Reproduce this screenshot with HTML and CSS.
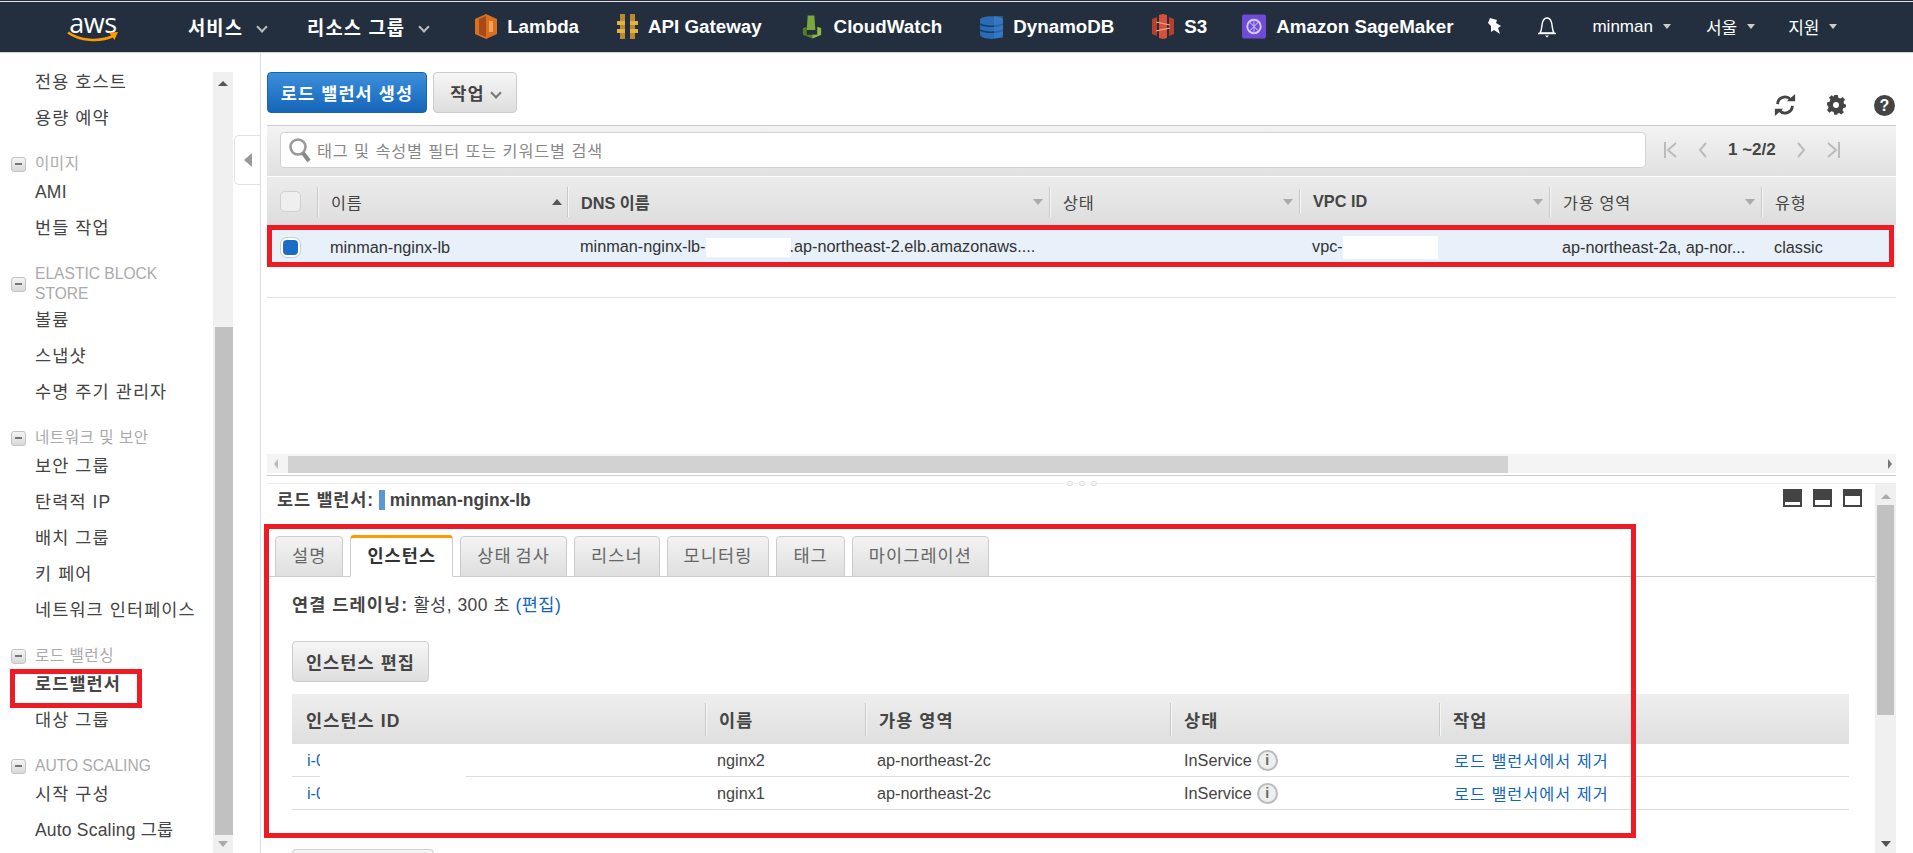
FILE: index.html
```html
<!DOCTYPE html>
<html lang="ko">
<head>
<meta charset="UTF-8" />
<title>EC2 Management Console</title>
<link rel="stylesheet" href="styles.css">
</head>
<body>

<!-- Top navigation -->
<header class="topbar">
  <div class="logo">
    <span class="logo-text">aws</span>
    <svg class="logo-smile" width="52" height="12" viewBox="0 0 52 12"><path d="M1 1.5C12 9.5 32 12 47 4.5" fill="none" stroke="#f90" stroke-width="2.6"/><path d="M42 1.5l9-.5-3.500 8z" fill="#f90"/></svg>
  </div>
  <div class="menu menu-services">서비스<i class="chev"></i></div>
  <div class="menu menu-groups">리소스 그룹<i class="chev"></i></div>
  <nav class="shortcuts">
    <a class="shortcut">
      <svg width="22" height="25" viewBox="0 0 22 25"><path d="M0 5l11-5 11 5v15l-11 5-11-5z" fill="#d8701f"/><path d="M4 5l7-3v21l-7-3z" fill="#a8491a"/><path d="M14 7h4v11h-4z" fill="#f5a35a"/></svg>
      Lambda</a>
    <a class="shortcut">
      <svg width="21" height="25" viewBox="0 0 21 25"><path d="M3 0h5v25H3zM13 0h5v25h-5z" fill="#b98a2e"/><path d="M0 7h8v4H0zM13 7h8v4h-8zM0 15h8v4H0zM13 15h8v4h-8z" fill="#e0b23f"/></svg>
      API Gateway</a>
    <a class="shortcut">
      <svg width="24" height="24" viewBox="0 0 25 24"><path d="M8 0h7l1 15H7z" fill="#7aa83c"/><path d="M3 13l4-1v8h11v-8l4 1v7l-9 4-10-4z" fill="#587d2a"/><path d="M13 24l9-4v-7l-4-1v8h-5z" fill="#8cba48"/></svg>
      CloudWatch</a>
    <a class="shortcut">
      <svg width="23" height="24" viewBox="0 0 23 24"><path d="M0 5C0 0 23 0 23 5v14c0 6.500-23 6.500-23 0z" fill="#2b6cb5"/><path d="M0 9c5 3 18 3 23 0M0 15c5 3 18 3 23 0" fill="none" stroke="#123f75" stroke-width="1.600"/><path d="M14 1h9v22h-9z" fill="#3f86cf" opacity=".5"/></svg>
      DynamoDB</a>
    <a class="shortcut shortcut-s3">
      <svg width="22" height="25" viewBox="0 0 22 25"><path d="M0 5l5-2v19l-5-2zM22 5l-5-2v19l5-2z" fill="#b8402a"/><path d="M7 1l4-1v25l-4-1zM15 1l-4-1v25l4-1z" fill="#d9503a"/><path d="M4 8l14 3M4 17l14-3" stroke="#f3b0a3" stroke-width="1.200"/></svg>
      S3</a>
    <a class="shortcut">
      <svg width="24" height="25" viewBox="0 0 25 25"><rect width="25" height="25" rx="2" fill="#6f4bd8"/><circle cx="12.500" cy="12.500" r="7" fill="none" stroke="#d9cffa" stroke-width="2"/><path d="M8 8l9 9M17 8l-9 9M12.500 5v15" stroke="#b9a8f3" stroke-width="1.200"/></svg>
      Amazon SageMaker</a>
  </nav>
  <svg class="pin" width="17" height="17" viewBox="0 0 17 17"><path d="M4 0l7 2-1 3 5 3-3 2 2 6-6-4-3 2V8L2 5z" fill="#fff"/></svg>
  <svg class="bell" width="20" height="22" viewBox="0 0 20 22"><path d="M3 17c2-3 1.500-7 2.500-10.500C6.500 3 8 2 10 2s3.500 1 4.500 4.500C15.500 10 15 14 17 17z" fill="none" stroke="#fff" stroke-width="1.400"/><path d="M1 17.500h18" stroke="#fff" stroke-width="1.400"/><path d="M8 19.500h4l-2 2z" fill="#fff"/></svg>
  <div class="menu-small menu-user">minman<i class="caret"></i></div>
  <div class="menu-small menu-region">서울<i class="caret"></i></div>
  <div class="menu-small menu-support">지원<i class="caret"></i></div>
</header>

<div class="layout">

  <!-- Left navigation -->
  <aside class="sidenav">
    <div class="side-list">
      <a class="side-item">전용 호스트</a>
      <a class="side-item">용량 예약</a>
      <div class="side-group"><i class="minus"></i><span class="ko">이미지</span></div>
      <a class="side-item side-latin">AMI</a>
      <a class="side-item">번들 작업</a>
      <div class="side-group side-group-tall"><i class="minus"></i><span>ELASTIC BLOCK<br>STORE</span></div>
      <a class="side-item">볼륨</a>
      <a class="side-item">스냅샷</a>
      <a class="side-item">수명 주기 관리자</a>
      <div class="side-group"><i class="minus"></i><span class="ko">네트워크 및 보안</span></div>
      <a class="side-item">보안 그룹</a>
      <a class="side-item">탄력적 IP</a>
      <a class="side-item">배치 그룹</a>
      <a class="side-item">키 페어</a>
      <a class="side-item">네트워크 인터페이스</a>
      <div class="side-group"><i class="minus"></i><span class="ko">로드 밸런싱</span></div>
      <a class="side-item active">로드밸런서<span class="mark mark-side"></span></a>
      <a class="side-item">대상 그룹</a>
      <div class="side-group"><i class="minus"></i><span>AUTO SCALING</span></div>
      <a class="side-item">시작 구성</a>
      <a class="side-item side-latin">Auto Scaling 그룹</a>
    </div>
    <div class="side-scroll">
      <i class="tri-up"></i>
      <div class="side-thumb"></div>
      <i class="tri-down"></i>
    </div>
    <div class="collapse-tab"><i class="tri-left"></i></div>
  </aside>

  <main class="content">
    <div class="toolbar">
      <button class="btn btn-primary">로드 밸런서 생성</button>
      <button class="btn btn-default">작업<i class="btn-chev"></i></button>
      <div class="tool-icons">
        <svg class="refresh" width="24" height="24" viewBox="0 0 26 24"><path d="M5 11a8 8 0 0 1 14-5" fill="none" stroke="#444" stroke-width="3"/><path d="M15 8h9V0z" fill="#444"/><path d="M21 13a8 8 0 0 1-14 5" fill="none" stroke="#444" stroke-width="3"/><path d="M11 16H2v8z" fill="#444"/></svg>
        <svg width="20" height="20" viewBox="0 0 20 20"><path d="M8 0h4l.6 3 2.400 1 2.500-1.700 2.500 3-1.700 2.400.7 2.300 2 .6v3l-2.800.8-1 2.300 1.600 2.500-3 2.500-2.300-1.600-2.500.9L12 22H8l-.6-3-2.400-1-2.500 1.700-2.500-3 1.700-2.400-.7-2.300L0 11.400v-3l2.800-.8 1-2.300L2.200 2.800l3-2.500L7.500 1.900z" fill="#444" transform="scale(.9)"/><circle cx="9" cy="10" r="3" fill="#fff"/></svg>
        <span class="help-icon">?</span>
      </div>
    </div>

    <div class="filter-bar">
      <div class="search-box">
        <svg width="24" height="26" viewBox="0 0 24 26"><circle cx="10" cy="10" r="7.500" fill="none" stroke="#999" stroke-width="2.600"/><path d="M15 16l6 8" stroke="#888" stroke-width="4"/></svg>
        <span>태그 및 속성별 필터 또는 키워드별 검색</span>
      </div>
      <div class="pager">
        <svg width="14" height="16" viewBox="0 0 14 16"><path d="M1 0v16M12 1L4 8l8 7" fill="none" stroke="#bbb" stroke-width="2"/></svg>
        <svg width="10" height="16" viewBox="0 0 10 16"><path d="M8 1L2 8l6 7" fill="none" stroke="#bbb" stroke-width="2"/></svg>
        <b>1 ~2/2</b>
        <svg width="10" height="16" viewBox="0 0 10 16"><path d="M2 1l6 7-6 7" fill="none" stroke="#bbb" stroke-width="2"/></svg>
        <svg width="14" height="16" viewBox="0 0 14 16"><path d="M13 0v16M2 1l8 7-8 7" fill="none" stroke="#bbb" stroke-width="2"/></svg>
      </div>
    </div>

    <div class="lb-grid lb-head">
      <div class="cell"><i class="check"></i></div>
      <div class="cell cell-sep cell-ko">이름<i class="sort sort-on"></i></div>
      <div class="cell cell-sep strong">DNS 이름<i class="sort"></i></div>
      <div class="cell cell-sep cell-ko">상태<i class="sort"></i></div>
      <div class="cell cell-sep strong">VPC ID<i class="sort"></i></div>
      <div class="cell cell-sep cell-ko">가용 영역<i class="sort"></i></div>
      <div class="cell cell-sep cell-ko">유형</div>
    </div>
    <div class="lb-grid lb-row">
      <div class="cell"><i class="check checked"></i></div>
      <div class="cell">minman-nginx-lb</div>
      <div class="cell">minman-nginx-lb-<span class="redact redact-dns"></span>.ap-northeast-2.elb.amazonaws....</div>
      <div class="cell"></div>
      <div class="cell">vpc-<span class="redact redact-vpc"></span></div>
      <div class="cell">ap-northeast-2a, ap-nor...</div>
      <div class="cell">classic</div>
      <span class="mark mark-row"></span>
    </div>
    <div class="lb-empty"></div>

    <div class="hscroll">
      <i class="tri-left tri-small"></i>
      <div class="hthumb"></div>
      <i class="tri-right"></i>
    </div>

    <div class="splitter"><i></i><i></i><i></i></div>

    <section class="pane">
      <div class="pane-body">
        <div class="pane-head">
          <h2><span class="pane-label">로드 밸런서:</span> <i class="lb-flag"></i> minman-nginx-lb</h2>
          <div class="view-icons">
            <i class="view view-s"></i>
            <i class="view view-m"></i>
            <i class="view view-l"></i>
          </div>
        </div>

        <div class="tabs">
          <div class="tab">설명</div>
          <div class="tab tab-active">인스턴스</div>
          <div class="tab">상태 검사</div>
          <div class="tab">리스너</div>
          <div class="tab">모니터링</div>
          <div class="tab">태그</div>
          <div class="tab">마이그레이션</div>
        </div>

        <div class="tab-body">
          <p class="drain"><b>연결 드레이닝:</b> 활성, 300 초 <a>(편집)</a></p>
          <button class="btn btn-default btn-edit">인스턴스 편집</button>

          <div class="inst-table">
            <div class="inst-grid inst-head">
              <div class="inst-cell">인스턴스 ID</div>
              <div class="inst-cell cell-sep">이름</div>
              <div class="inst-cell cell-sep">가용 영역</div>
              <div class="inst-cell cell-sep">상태</div>
              <div class="inst-cell cell-sep">작업</div>
            </div>
            <div class="inst-grid inst-row">
              <div class="inst-cell"><a>i-0</a></div>
              <div class="inst-cell">nginx2</div>
              <div class="inst-cell">ap-northeast-2c</div>
              <div class="inst-cell inst-status">InService <i class="info">i</i></div>
              <div class="inst-cell"><a class="inst-action">로드 밸런서에서 제거</a></div>
            </div>
            <div class="inst-grid inst-row">
              <div class="inst-cell"><a>i-0</a></div>
              <div class="inst-cell">nginx1</div>
              <div class="inst-cell">ap-northeast-2c</div>
              <div class="inst-cell inst-status">InService <i class="info">i</i></div>
              <div class="inst-cell"><a class="inst-action">로드 밸런서에서 제거</a></div>
            </div>
            <span class="redact-ids"></span>
          </div>

          <button class="btn btn-default btn-next"></button>
        </div>
        <span class="mark mark-pane"></span>
      </div>
      <div class="pane-scroll">
        <i class="tri-up tri-light"></i>
        <div class="pane-thumb"></div>
        <i class="tri-down tri-dark"></i>
      </div>
    </section>
  </main>
</div>

</body>
</html>
```

FILE: styles.css
```css
html, body {
  margin: 0;
  height: 853px;
  overflow: hidden;
}
body {
  font-family: "Liberation Sans", "Noto Sans CJK KR", sans-serif;
  font-size: 16.25px;
  color: #444;
  background-color: #fff;
}
a { color: #1166bb; }
i { font-style: normal; }

/* Red annotation boxes drawn over the screenshot */
.mark {
  position: absolute;
  border: 5px solid #ed1c24;
  box-sizing: border-box;
  pointer-events: none;
}
.mark-side { left: 10px; top: 3px; width: 132px; height: 39px; }
.mark-row { left: 0; top: 0; right: 2px; bottom: 0; }
.mark-pane { left: -3px; top: 40px; width: 1372px; height: 314px; }

/* Top navigation */
.topbar {
  display: flex;
  align-items: center;
  box-sizing: border-box;
  height: 53px;
  padding-left: 67px;
  background-color: #232f3e;
  border-top: 1px solid #232f3e;
  border-bottom: 1px solid #d0d0d0;
  box-shadow: inset 0 1px 0 #e6e6e6;
  color: #fff;
}
.logo {
  position: relative;
  width: 52px;
  height: 30px;
  flex: none;
}
.logo-text {
  display: block;
  font-family: "Open Sans", sans-serif;
  font-size: 27px;
  line-height: 22px;
  letter-spacing: -.5px;
  text-align: center;
}
.logo-smile { position: absolute; left: 0; top: 19px; }
.menu {
  display: flex;
  align-items: center;
  font-size: 18.75px;
  font-weight: bold;
  letter-spacing: 1.1px;
  white-space: nowrap;
}
.menu-services { margin-left: 69px; }
.menu-groups { margin-left: 41px; }
.chev {
  width: 6px;
  height: 6px;
  margin: 0 0 0 15px;
  border-right: 2px solid #bbb;
  border-bottom: 2px solid #bbb;
  transform: rotate(45deg);
}
.shortcuts {
  display: flex;
  gap: 38px;
  margin-left: 47px;
}
.shortcut {
  display: flex;
  align-items: center;
  gap: 10px;
  color: #fff;
  font-size: 18.75px;
  font-weight: bold;
  white-space: nowrap;
}
.shortcut-s3 { margin-right: -3px; }
.pin { margin-left: 33px; flex: none; }
.bell { margin-left: 34px; flex: none; }
.menu-small {
  display: flex;
  align-items: center;
  font-size: 17px;
  white-space: nowrap;
}
.menu-user { margin-left: 35px; }
.menu-region { margin-left: 35px; }
.menu-support { margin-left: 33px; }
.caret {
  margin-left: 10px;
  border-left: 4px solid transparent;
  border-right: 4px solid transparent;
  border-top: 5px solid #ccc;
}

.layout {
  display: flex;
  height: 800px;
  overflow: hidden;
}

/* Left navigation */
.sidenav {
  position: relative;
  display: flex;
  flex: none;
  width: 261px;
  box-sizing: border-box;
  border-right: 1px solid #ddd;
}
.side-list {
  width: 213px;
  padding-top: 11px;
  flex: none;
}
.side-item {
  position: relative;
  display: block;
  height: 36px;
  line-height: 36px;
  padding-left: 35px;
  font-size: 17.5px;
  letter-spacing: 1.1px;
  color: #444;
  white-space: nowrap;
}
.side-latin { letter-spacing: .2px; }
.side-item.active { font-weight: bold; }
.side-group {
  display: flex;
  align-items: center;
  margin-top: 18px;
  padding-left: 11px;
  font-size: 15.6px;
  line-height: 20px;
  color: #aaa;
  min-height: 20px;
}
.side-group-tall { margin-bottom: -2px; }
.side-group span { margin-left: 9px; }
.side-group .ko { letter-spacing: .5px; }
.minus {
  position: relative;
  flex: none;
  box-sizing: border-box;
  width: 15px;
  height: 15px;
  border: 1px solid #c4c4c4;
  border-radius: 3px;
  background: linear-gradient(#f4f4f4, #d8d8d8);
}
.minus::after {
  content: "";
  position: absolute;
  left: 3px;
  right: 3px;
  top: 5px;
  height: 2px;
  background-color: #777;
}
.side-scroll {
  position: relative;
  width: 20px;
  margin-top: 19px;
  background-color: #f0f0f0;
}
.side-thumb {
  position: absolute;
  left: 2px;
  right: 0;
  top: 255px;
  height: 508px;
  background-color: #c1c1c1;
}
.tri-up, .tri-down, .tri-left, .tri-right { display: block; width: 0; height: 0; }
.tri-up {
  position: absolute;
  left: 5px;
  top: 9px;
  border-left: 5px solid transparent;
  border-right: 5px solid transparent;
  border-bottom: 5px solid #555;
}
.tri-down {
  position: absolute;
  left: 5px;
  bottom: 6px;
  border-left: 5px solid transparent;
  border-right: 5px solid transparent;
  border-top: 6px solid #aaa;
}
.collapse-tab {
  position: absolute;
  left: 234px;
  top: 82px;
  display: flex;
  align-items: center;
  justify-content: center;
  width: 26px;
  height: 50px;
  box-sizing: border-box;
  background-color: #fff;
  border: 1px solid #e2e2e2;
  border-right: none;
  border-radius: 5px 0 0 5px;
}
.tri-left {
  border-top: 7px solid transparent;
  border-bottom: 7px solid transparent;
  border-right: 8px solid #999;
}
.tri-small {
  border-top-width: 5px;
  border-bottom-width: 5px;
  border-right: 4px solid #bbb;
}
.tri-right {
  border-top: 5px solid transparent;
  border-bottom: 5px solid transparent;
  border-left: 4px solid #777;
}

/* Main content */
.content {
  flex: 1;
  display: flex;
  flex-direction: column;
  min-width: 0;
  padding: 0 17px 0 6px;
}
.toolbar {
  display: flex;
  align-items: flex-start;
  gap: 6px;
  height: 72px;
  box-sizing: border-box;
  padding-top: 19px;
  flex: none;
}
.btn {
  height: 41px;
  box-sizing: border-box;
  padding: 0;
  border-radius: 4px;
  font-family: inherit;
  font-size: 17.5px;
  font-weight: bold;
  letter-spacing: 1.1px;
  cursor: pointer;
}
.btn-primary {
  width: 160px;
  color: #fff;
  border: 1px solid #1c62a8;
  background: linear-gradient(#3d8fdb, #1565b9);
}
.btn-default {
  color: #444;
  border: 1px solid #ccc;
  background: linear-gradient(#f6f6f6, #dedede);
}
.toolbar .btn-default { width: 84px; }
.btn-chev {
  display: inline-block;
  width: 6px;
  height: 6px;
  margin: 0 0 3px 7px;
  border-right: 2px solid #777;
  border-bottom: 2px solid #777;
  transform: rotate(45deg);
}
.tool-icons {
  display: flex;
  align-items: center;
  gap: 27px;
  margin-left: auto;
  margin-top: 21px;
  margin-right: 1px;
}
.refresh { margin-right: 3px; }
.help-icon {
  display: block;
  width: 21px;
  height: 21px;
  border-radius: 50%;
  background-color: #444;
  color: #fff;
  font-size: 16px;
  font-weight: bold;
  line-height: 21px;
  text-align: center;
}

.filter-bar {
  display: flex;
  align-items: center;
  flex: none;
  height: 52px;
  box-sizing: border-box;
  padding-left: 13px;
  padding-bottom: 3px;
  border-top: 1px solid #ccc;
  border-bottom: 1px solid #fff;
  background: linear-gradient(#f3f3f3, #e1e1e1);
}
.search-box {
  display: flex;
  align-items: center;
  gap: 5px;
  width: 1366px;
  height: 36px;
  box-sizing: border-box;
  padding-left: 7px;
  background-color: #fff;
  border: 1px solid #d2d2d2;
  border-radius: 4px;
  font-size: 16.25px;
  letter-spacing: .9px;
  color: #888;
}
.pager {
  display: flex;
  align-items: center;
  margin-left: 18px;
  gap: 20px;
  font-size: 17px;
}

/* Load balancer table */
.lb-grid {
  display: grid;
  grid-template-columns: 50px 250px 482px 250px 250px 212px 135px;
  flex: none;
}
.lb-head {
  height: 48px;
  padding-top: 1px;
  box-sizing: border-box;
  background: linear-gradient(#ececec, #dddddd);
  align-items: center;
}
.cell {
  position: relative;
  padding-left: 14px;
  white-space: nowrap;
}
.cell.strong { font-weight: bold; }
.cell-ko { letter-spacing: .7px; }
.cell-sep::before {
  content: "";
  position: absolute;
  left: 0;
  top: -3px;
  bottom: -3px;
  width: 1px;
  background-color: #c9c9c9;
  box-shadow: 1px 0 0 #f6f6f6;
}
.check {
  display: block;
  width: 21px;
  height: 21px;
  margin-left: -1px;
  box-sizing: border-box;
  border: 1px solid #cfcfcf;
  border-radius: 5px;
  background-color: #efefef;
}
.check.checked {
  background: #1a6cc4;
  border: 2px solid #fff;
  outline: 1px solid #ccc;
  outline-offset: 0;
  width: 19px;
  height: 19px;
  margin-left: 1px;
  border-radius: 6px;
}
.sort {
  position: absolute;
  right: 6px;
  top: 50%;
  margin-top: -3px;
  border-left: 5px solid transparent;
  border-right: 5px solid transparent;
  border-top: 6px solid #aaa;
}
.sort-on {
  right: 5px;
  border-top: none;
  border-bottom: 6px solid #555;
}
.lb-row {
  position: relative;
  height: 42px;
  padding-top: 2px;
  box-sizing: border-box;
  align-items: center;
  background-color: #e8f0fa;
  color: #333;
}
.lb-row .cell { padding-left: 13px; }
.redact {
  display: inline-block;
  vertical-align: middle;
  background-color: #fff;
}
.redact-dns { width: 85px; height: 19px; margin-right: -1px; }
.redact-vpc { width: 95px; height: 23px; }
.lb-empty {
  flex: none;
  height: 31px;
  box-sizing: border-box;
  border-bottom: 1px solid #e0e0e0;
}

.hscroll {
  position: relative;
  flex: none;
  height: 19px;
  margin-top: 156px;
  background-color: #f4f4f4;
}
.hthumb {
  position: absolute;
  left: 21px;
  top: 2px;
  width: 1220px;
  height: 17px;
  background-color: #d2d2d2;
}
.hscroll .tri-small { position: absolute; left: 7px; top: 5px; }
.hscroll .tri-right { position: absolute; right: 4px; top: 5px; }
.splitter {
  display: flex;
  justify-content: center;
  gap: 6px;
  flex: none;
  height: 8px;
  margin-top: 2px;
  padding-top: 5px;
  box-sizing: border-box;
  border-top: 1px solid #ccc;
}
.splitter i {
  width: 4px;
  height: 3px;
  border: 1px solid #ddd;
  border-radius: 2px;
}

/* Detail pane */
.pane {
  flex: 1;
  display: flex;
  min-height: 0;
  border-top: 1px solid #eee;
}
.pane-body {
  position: relative;
  flex: 1;
  min-width: 0;
}
.pane-head {
  display: flex;
  justify-content: space-between;
  align-items: flex-start;
  height: 51px;
  box-sizing: border-box;
  padding: 5px 13px 0 10px;
}
.pane-head h2 {
  display: flex;
  align-items: center;
  gap: 5px;
  margin: 1px 0 0;
  font-size: 17.5px;
  line-height: 20px;
  font-weight: bold;
  color: #444;
}
.pane-label { letter-spacing: .8px; }
.lb-flag {
  width: 6px;
  height: 20px;
  background-color: #5a97d3;
}
.view-icons { display: flex; gap: 11px; }
.view {
  position: relative;
  display: block;
  width: 19px;
  height: 18px;
  background-color: #444;
}
.view::after {
  content: "";
  position: absolute;
  left: 2px;
  right: 2px;
  bottom: 2px;
  background-color: #fff;
}
.view-s::after { height: 3px; }
.view-m::after { height: 5px; }
.view-l::after { height: 9px; }

.tabs {
  display: flex;
  align-items: flex-end;
  gap: 7px;
  height: 42px;
  box-sizing: border-box;
  padding-left: 8px;
  border-bottom: 1px solid #ccc;
}
.tab {
  height: 41px;
  line-height: 38px;
  box-sizing: border-box;
  padding: 0 16px;
  margin-bottom: -1px;
  font-size: 17.5px;
  letter-spacing: 1.1px;
  word-spacing: -2px;
  color: #666;
  border: 1px solid #ccc;
  border-radius: 4px 4px 0 0;
  background: linear-gradient(#f3f3f3, #dfdfdf);
}
.tab-active {
  height: 42px;
  line-height: 36px;
  color: #333;
  font-weight: bold;
  background: #fff;
  border-top: 3px solid #f90;
  border-bottom: 1px solid #fff;
}

.tab-body { padding-left: 25px; }
.drain {
  margin: 18px 0 26px;
  font-size: 17.5px;
  letter-spacing: .5px;
  line-height: 20px;
}
.drain b { letter-spacing: 1.1px; }
.btn-edit {
  display: block;
  width: 137px;
}
.inst-table {
  position: relative;
  width: 1557px;
  margin-top: 12px;
}
.inst-grid {
  display: grid;
  grid-template-columns: 413px 160px 305px 269px 410px;
  align-items: center;
}
.inst-head {
  height: 50px;
  background: linear-gradient(#eeeeee, #dfdfdf);
  font-size: 17.5px;
  font-weight: bold;
  letter-spacing: 1.1px;
}
.inst-row {
  height: 33px;
  box-sizing: border-box;
  border-bottom: 1px solid #dedede;
}
.inst-cell {
  position: relative;
  padding-left: 14px;
  white-space: nowrap;
}
.inst-row .inst-cell:first-child { padding-left: 15px; }
.inst-row .inst-cell:nth-child(2), .inst-row .inst-cell:nth-child(3) { padding-left: 12px; }
.inst-head .cell-sep::before { top: -4px; bottom: -4px; }
.inst-row a { color: #1166bb; }
.inst-status { display: flex; align-items: center; gap: 5px; }
.inst-action { letter-spacing: 1px; margin-left: 1px; }
.info {
  display: block;
  width: 21px;
  height: 21px;
  box-sizing: border-box;
  border: 2px solid #bbb;
  border-radius: 50%;
  background-color: #eee;
  font-size: 14px;
  font-weight: bold;
  line-height: 17px;
  text-align: center;
  color: #666;
}
.redact-ids {
  position: absolute;
  left: 28px;
  top: 55px;
  width: 146px;
  height: 55px;
  background-color: #fff;
}
.btn-next {
  display: block;
  width: 142px;
  margin-top: 39px;
}

.pane-scroll {
  position: relative;
  flex: none;
  width: 21px;
  background-color: #f0f0f0;
}
.pane-thumb {
  position: absolute;
  left: 2px;
  right: 2px;
  top: 21px;
  height: 210px;
  background-color: #c1c1c1;
}
.tri-light { border-bottom-color: #aaa; left: 6px; top: 10px; }
.tri-dark { border-top-color: #555; left: 6px; bottom: 6px; }
```
